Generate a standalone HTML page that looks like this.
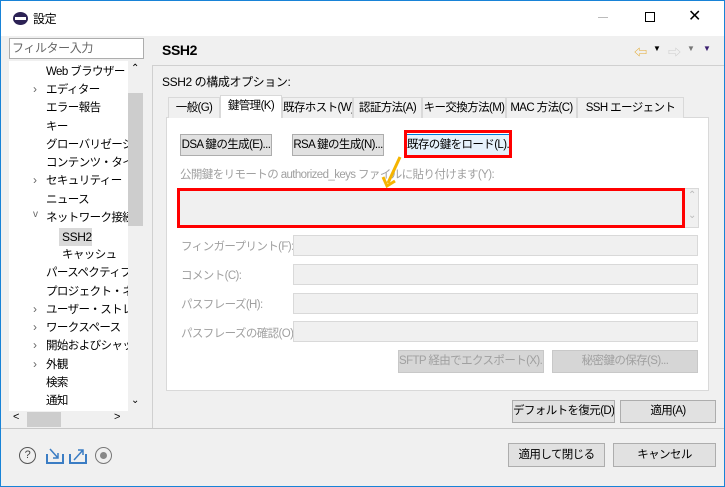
<!DOCTYPE html>
<html><head><meta charset="utf-8"><style>
*{box-sizing:border-box;margin:0;padding:0;white-space:nowrap}
body{width:725px;height:487px;overflow:hidden;background:#f0f0f0;font-family:"Liberation Sans","Noto Sans CJK JP",sans-serif;font-size:12px;letter-spacing:-0.4px;color:#000;position:relative}
.a{position:absolute}
.btn{position:absolute;background:#e1e1e1;border:1px solid #adadad;text-align:center;line-height:20px;font-size:11.5px;overflow:hidden;letter-spacing:-0.6px}
.dis{color:#a0a0a0;background:#d6d6d6;border-color:#c8c8c8}
.fld{position:absolute;left:293px;width:405px;height:21px;background:#f0f0f0;border:1px solid #d9d9d9}
.lbl{position:absolute;left:181px;color:#a0a0a0;font-size:11.5px;letter-spacing:-0.6px}
.tab{position:absolute;top:97px;height:21px;border:1px solid #d9d9d9;border-bottom:none;background:#f0f0f0;line-height:20px;text-align:center;overflow:hidden;font-size:11.5px;letter-spacing:-0.6px}
.tr{position:absolute;left:46px;line-height:18px;font-size:11.5px;letter-spacing:-0.6px}
.ch{position:absolute;left:33px;color:#666}
</style></head><body>
<div class="a" style="left:0;top:0;width:725px;height:487px;border:1px solid #1883d7"></div>
<div class="a" style="left:1px;top:1px;width:723px;height:35px;background:#fff"></div>
<div class="a" style="left:13px;top:12px;width:15px;height:13px;border-radius:50%;background:#2c2255;"></div>
<div class="a" style="left:15px;top:17px;width:11px;height:3px;background:#fff"></div>
<div class="a" style="left:33px;top:10px">設定</div>
<div class="a" style="left:598px;top:17px;width:10px;height:1px;background:#bbb"></div>
<div class="a" style="left:645px;top:12px;width:10px;height:10px;border:1px solid #000"></div>
<div class="a" style="left:688px;top:6px;font-size:16px">✕</div>

<div class="a" style="left:9px;top:38px;width:135px;height:21px;background:#fff;border:1px solid #adadad;color:#666;padding-left:2px;line-height:19px">フィルター入力</div>
<div class="a" style="left:9px;top:61px;width:119px;height:350px;background:#fff;overflow:hidden">
<div class="tr" style="left:37px;top:2px">Web ブラウザー</div>
<div class="ch" style="left:24px;top:21px">›</div><div class="tr" style="left:37px;top:20px">エディター</div>
<div class="tr" style="left:37px;top:38px">エラー報告</div>
<div class="tr" style="left:37px;top:57px">キー</div>
<div class="tr" style="left:37px;top:75px">グローバリゼーショ</div>
<div class="tr" style="left:37px;top:93px">コンテンツ・タイプ</div>
<div class="ch" style="left:24px;top:112px">›</div><div class="tr" style="left:37px;top:111px">セキュリティー</div>
<div class="tr" style="left:37px;top:130px">ニュース</div>
<div class="ch" style="left:24px;top:148px;font-size:10px">v</div><div class="tr" style="left:37px;top:148px">ネットワーク接続</div>
<div class="a" style="left:50px;top:167px;width:33px;height:18px;background:#d9d9d9;line-height:18px;padding-left:3px">SSH2</div>
<div class="tr" style="left:53px;top:185px">キャッシュ</div>
<div class="tr" style="left:37px;top:203px">パースペクティブ</div>
<div class="tr" style="left:37px;top:222px">プロジェクト・ネーデ</div>
<div class="ch" style="left:24px;top:241px">›</div><div class="tr" style="left:37px;top:240px">ユーザー・ストレージ</div>
<div class="ch" style="left:24px;top:259px">›</div><div class="tr" style="left:37px;top:258px">ワークスペース</div>
<div class="ch" style="left:24px;top:277px">›</div><div class="tr" style="left:37px;top:276px">開始およびシャッ</div>
<div class="ch" style="left:24px;top:296px">›</div><div class="tr" style="left:37px;top:295px">外観</div>
<div class="tr" style="left:37px;top:313px">検索</div>
<div class="tr" style="left:37px;top:331px">通知</div>
</div>
<div class="a" style="left:128px;top:61px;width:16px;height:350px;background:#f0f0f0"></div>
<div class="a" style="left:128px;top:93px;width:15px;height:133px;background:#cdcdcd"></div>
<div class="a" style="left:131px;top:63px;font-size:10px">⌃</div>
<div class="a" style="left:131px;top:395px;font-size:10px">⌄</div>
<div class="a" style="left:9px;top:411px;width:135px;height:16px;background:#f0f0f0"></div>
<div class="a" style="left:27px;top:412px;width:34px;height:15px;background:#cdcdcd"></div>
<div class="a" style="left:13px;top:411px;font-size:11px">&lt;</div>
<div class="a" style="left:114px;top:411px;font-size:11px">&gt;</div>

<div class="a" style="left:152px;top:36px;width:1px;height:392px;background:#d0d0d0"></div>
<div class="a" style="left:152px;top:36px;width:572px;height:30px;background:#f0f0f0;border-bottom:1px solid #d0d0d0"></div>
<div class="a" style="left:162px;top:42px;font-weight:bold;font-size:14px">SSH2</div>
<div class="a" style="left:634px;top:42px;color:#e3a82b;font-size:13px">⇦</div>
<div class="a" style="left:653px;top:44px;font-size:8px">▼</div>
<div class="a" style="left:668px;top:42px;color:#ccc;font-size:13px">⇨</div>
<div class="a" style="left:687px;top:44px;font-size:8px;color:#777">▼</div>
<div class="a" style="left:703px;top:44px;font-size:8px;color:#3a1e6e">▼</div>
<div class="a" style="left:162px;top:73px">SSH2 の構成オプション:</div>

<div class="a" style="left:166px;top:117px;width:543px;height:274px;background:#fff;border:1px solid #d9d9d9"></div>
<div class="tab" style="left:168px;width:52px">一般(G)</div>
<div class="tab" style="left:220px;width:62px;top:95px;height:23px;background:#fff">鍵管理(K)</div>
<div class="tab" style="left:282px;width:71px">既存ホスト(W)</div>
<div class="tab" style="left:353px;width:69px">認証方法(A)</div>
<div class="tab" style="left:422px;width:84px">キー交換方法(M)</div>
<div class="tab" style="left:506px;width:71px">MAC 方法(C)</div>
<div class="tab" style="left:577px;width:107px">SSH エージェント</div>

<div class="btn" style="left:180px;top:134px;width:92px;height:22px">DSA 鍵の生成(E)...</div>
<div class="btn" style="left:292px;top:134px;width:92px;height:22px">RSA 鍵の生成(N)...</div>
<div class="btn" style="left:406px;top:134px;width:105px;height:22px;border:1px solid #0078d7;background:#e5f1fb">既存の鍵をロード(L)...</div>
<div class="a" style="left:404px;top:130px;width:108px;height:28px;border:3px solid #f00"></div>
<div class="a" style="left:180px;top:166px;color:#a0a0a0;font-size:11.5px;letter-spacing:-0.6px">公開鍵をリモートの authorized_keys ファイルに貼り付けます(Y):</div>
<div class="a" style="left:177px;top:188px;width:522px;height:40px;background:#f0f0f0;border:1px solid #d9d9d9"></div>
<div class="a" style="left:688px;top:190px;color:#bbb;font-size:10px">⌃</div>
<div class="a" style="left:688px;top:210px;color:#bbb;font-size:10px">⌄</div>
<div class="a" style="left:177px;top:188px;width:508px;height:40px;border:3px solid #f00"></div>
<svg class="a" style="left:380px;top:155px" width="24" height="36"><path d="M20 2 L8 28" stroke="#f5b400" stroke-width="3"/><path d="M3 22 L7 31 L15 26" stroke="#f5b400" stroke-width="3" fill="none"/></svg>

<div class="lbl" style="top:238px">フィンガープリント(F):</div><div class="fld" style="top:235px"></div>
<div class="lbl" style="top:267px">コメント(C):</div><div class="fld" style="top:264px"></div>
<div class="lbl" style="top:296px">パスフレーズ(H):</div><div class="fld" style="top:293px"></div>
<div class="lbl" style="top:325px">パスフレーズの確認(O):</div><div class="fld" style="top:321px"></div>
<div class="btn dis" style="left:398px;top:350px;width:146px;height:23px">SFTP 経由でエクスポート(X)...</div>
<div class="btn dis" style="left:552px;top:350px;width:146px;height:23px">秘密鍵の保存(S)...</div>

<div class="btn" style="left:512px;top:400px;width:103px;height:23px">デフォルトを復元(D)</div>
<div class="btn" style="left:620px;top:400px;width:96px;height:23px">適用(A)</div>
<div class="a" style="left:1px;top:428px;width:723px;height:1px;background:#c8c8c8"></div>
<div class="a" style="left:19px;top:447px;width:17px;height:17px;border:1.5px solid #555;border-radius:50%;text-align:center;line-height:14px;font-size:11px;color:#444">?</div>
<svg class="a" style="left:45px;top:446px" width="60" height="20"><path d="M2 8v9h16v-9" stroke="#3b7dc4" fill="none" stroke-width="2"/><path d="M5 3l8 9M13 7v5h-5" stroke="#3b7dc4" fill="none" stroke-width="1.5"/><path d="M25 8v9h16v-9" stroke="#3b7dc4" fill="none" stroke-width="2"/><path d="M29 14l9-10M33 4h5v5" stroke="#3b7dc4" fill="none" stroke-width="1.5"/></svg>
<div class="a" style="left:95px;top:447px;width:17px;height:17px;border:1.5px solid #777;border-radius:50%"></div>
<div class="a" style="left:100px;top:452px;width:7px;height:7px;background:#888;border-radius:50%"></div>
<div class="btn" style="left:508px;top:443px;width:97px;height:24px;line-height:22px">適用して閉じる</div>
<div class="btn" style="left:613px;top:443px;width:103px;height:24px;line-height:22px">キャンセル</div>
</body></html>
